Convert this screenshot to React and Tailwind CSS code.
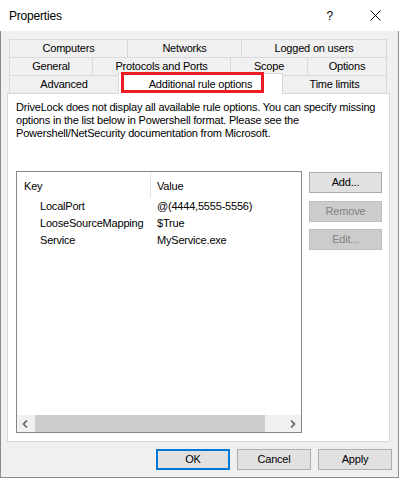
import React from 'react';

const tab = "flex items-center justify-center border-l border-t border-[#d9d9d9] bg-[#f0f0f0] whitespace-nowrap";
const btn = "h-[21px] flex items-center justify-center border border-[#adadad] bg-[#e1e1e1]";
const btnOff = "h-[21px] flex items-center justify-center border border-[#bfbfbf] bg-[#cccccc] text-[#838383]";

const Chevron = ({ dir }) => (
  <svg width="7" height="8" viewBox="0 0 7 8">
    {dir === 'left' ? (
      <polyline points="5,0.5 1.5,4 5,7.5" fill="none" stroke="#606060" strokeWidth="1.6" />
    ) : (
      <polyline points="2,0.5 5.5,4 2,7.5" fill="none" stroke="#606060" strokeWidth="1.6" />
    )}
  </svg>
);

const rows = [
  { key: 'LocalPort', value: '@(4444,5555-5556)' },
  { key: 'LooseSourceMapping', value: '$True' },
  { key: 'Service', value: 'MyService.exe' },
];

const App = () => {
  return (
    <div className="w-[400px] h-[480px] bg-white font-['Liberation_Sans',Arial,sans-serif] text-[11px] tracking-[-0.2px] text-black">
      <div className="w-[399px] h-[478px] flex flex-col">
        {/* title bar */}
        <div className="h-[31px] bg-white flex items-center pl-[9px] shrink-0">
          <span className="text-[12px] tracking-[-0.2px]">Properties</span>
          <span className="ml-auto text-[12px] mr-[37px]">?</span>
          <svg width="11" height="11" viewBox="0 0 11 11" className="mr-[18px]">
            <path d="M0.5 0.5 L10.5 10.5 M10.5 0.5 L0.5 10.5" stroke="#000" strokeWidth="1" />
          </svg>
        </div>

        <div className="flex-1 flex flex-col bg-[#f0f0f0] border-l border-r border-b border-[#8c8c8c]">
          <div className="ml-[6px] mr-[8px] pt-[8px]">
            {/* tabs */}
            <div className="mx-[2px]">
              <div className="flex h-[18px]">
                <div className={`${tab} w-[118px]`}>Computers</div>
                <div className={`${tab} w-[114px]`}>Networks</div>
                <div className={`${tab} w-[146px] border-r`}>Logged on users</div>
              </div>
              <div className="flex h-[18px]">
                <div className={`${tab} w-[83px]`}>General</div>
                <div className={`${tab} w-[138px]`}>Protocols and Ports</div>
                <div className={`${tab} w-[77px]`}>Scope</div>
                <div className={`${tab} w-[80px] border-r`}>Options</div>
              </div>
              <div className="flex h-[18px] items-end">
                <div className={`${tab} w-[109px] h-[18px]`}>Advanced</div>
                <div className="relative z-10 w-[165px] h-[21px] -mb-[1px] flex items-center justify-center bg-white border-l border-t border-r border-[#d9d9d9] whitespace-nowrap">
                  Additional rule options
                  <div className="absolute left-[2px] -top-[2px] w-[143px] h-[21px] border-[3px] border-[#ed1c24]" />
                </div>
                <div className="flex items-center justify-center border-t border-r border-[#d9d9d9] bg-[#f0f0f0] w-[104px] h-[18px]">Time limits</div>
              </div>
            </div>

            {/* panel */}
            <div className="bg-white border border-[#d9d9d9] h-[349px] flex flex-col pl-[8px] pt-[7px]">
              <p className="leading-[13px] whitespace-nowrap">
                DriveLock does not display all available rule options. You can specify missing<br />
                options in the list below in Powershell format. Please see the<br />
                Powershell/NetSecurity documentation from Microsoft.
              </p>

              <div className="flex mt-[31px]">
                <div className="w-[286px] h-[262px] border border-[#828790] flex flex-col">
                  <div className="flex h-[26px] leading-[13px]">
                    <div className="w-[134px] pl-[7px] pt-[8px] border-r border-[#e5e5e5]">Key</div>
                    <div className="pl-[6px] pt-[8px]">Value</div>
                  </div>
                  {rows.map((r) => (
                    <div key={r.key} className="flex h-[17px] items-center">
                      <div className="w-[134px] pl-[23px] whitespace-nowrap">{r.key}</div>
                      <div className="pl-[6px] whitespace-nowrap">{r.value}</div>
                    </div>
                  ))}
                  <div className="mt-auto h-[17px] flex bg-[#f0f0f0]">
                    <div className="w-[17px] flex items-center justify-center">
                      <Chevron dir="left" />
                    </div>
                    <div className="ml-[1px] w-[230px] bg-[#cdcdcd]" />
                    <div className="flex-1" />
                    <div className="w-[17px] flex items-center justify-center">
                      <Chevron dir="right" />
                    </div>
                  </div>
                </div>

                <div className="ml-[7px] w-[73px] flex flex-col">
                  <div className={`${btn} mt-[1px]`}>Add...</div>
                  <div className={`${btnOff} mt-[8px]`}>Remove</div>
                  <div className={`${btnOff} mt-[7px]`}>Edit...</div>
                </div>
              </div>
            </div>
          </div>

          {/* dialog buttons */}
          <div className="flex justify-end gap-[7px] pr-[6px] mt-[7px]">
            <div className="w-[74px] h-[21px] flex items-center justify-center border-2 border-[#0078d7] bg-[#e1e1e1]">OK</div>
            <div className={`${btn} w-[74px]`}>Cancel</div>
            <div className={`${btn} w-[74px]`}>Apply</div>
          </div>
        </div>
      </div>
    </div>
  );
};

export default App;
